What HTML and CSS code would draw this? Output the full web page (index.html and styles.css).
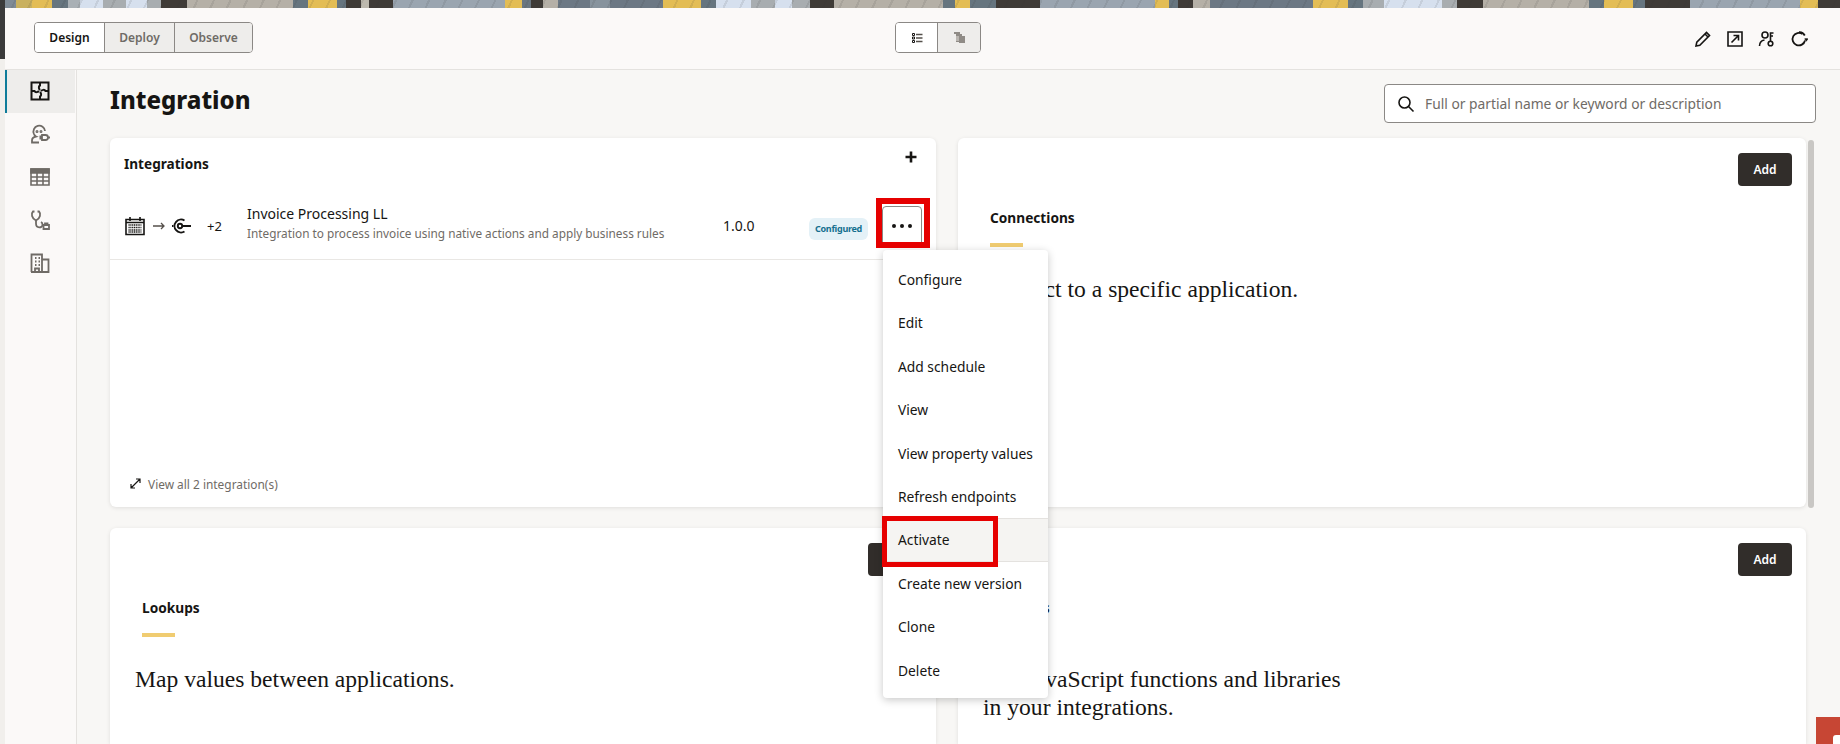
FILE: index.html
```html
<!DOCTYPE html>
<html lang="en">
<head>
<meta charset="utf-8">
<title>Integration</title>
<link rel="stylesheet" href="styles.css">
</head>
<body>
<div class="banner"></div>
<div class="app">
  <div class="edge"><div class="edge-dark"></div></div>
  <div class="main">
    <header class="toolbar">
      <div class="seg seg-tabs">
        <button class="seg-btn seg-on tab-a">Design</button>
        <button class="seg-btn tab-b">Deploy</button>
        <button class="seg-btn tab-c">Observe</button>
      </div>
      <div class="seg seg-views">
        <button class="seg-btn seg-on view-btn">
          <svg width="12" height="12" viewBox="0 0 12 12" fill="none" stroke="#161513"><path d="M1.500 1.500h2v2h-2zM1.500 8.500h2v2h-2zM1.500 5h2v2h-2z" stroke-width="1"/><path d="M5 2.500h6.500M5 6h6.500M5 9.500h6.500" stroke="#55504b" stroke-width="1.300"/></svg>
        </button>
        <button class="seg-btn view-btn">
          <svg width="13" height="13" viewBox="0 0 13 13"><path d="M1 1h6v2h2v2h3v7H6v-1H3V3H1z" fill="#8f8b86"/><path d="M3 5h3v5H3z" fill="#b9b5b0"/></svg>
        </button>
      </div>
      <div class="tools">
        <svg width="18" height="18" viewBox="0 0 18 18" fill="none" stroke="#161513" stroke-width="1.600"><path d="M2 16l.8-3.800L12.500 2.500l3 3L5.800 15.200z"/><path d="M11 4l3 3"/></svg>
        <svg width="18" height="18" viewBox="0 0 18 18" fill="none" stroke="#161513" stroke-width="1.600"><path d="M2 2h14v14H2z"/><path d="M5.500 12.500l7-7M7.500 5.500h5v5"/></svg>
        <svg width="18" height="18" viewBox="0 0 18 18" fill="none" stroke="#161513" stroke-width="1.600"><circle cx="7" cy="5" r="3"/><path d="M1.500 16c0-3.500 2-5.500 5-6"/><circle cx="12.500" cy="13.500" r="2.300"/><path d="M12.500 11V3h3M12.500 6h2.500"/></svg>
        <svg width="18" height="18" viewBox="0 0 18 18" fill="none" stroke="#161513" stroke-width="1.800"><path d="M15 10.500A6.300 6.300 0 1 1 12.500 4"/><path d="M14.800 8.800h3l-1.500 2.400z" fill="#161513" stroke-width="0.800"/><path d="M9 2.200c2.500-.2 4.600 1 5.800 3.300"/></svg>
      </div>
    </header>
    <div class="body-row">
      <nav class="sidebar">
        <div class="nav-item nav-on">
          <svg width="20" height="20" viewBox="0 0 20 20" fill="none" stroke="#161513" stroke-width="2"><path d="M1.500 1.500h17v17h-17z"/><path d="M10 1.500v3c-2 1-1 3.500 0 4.500M18.500 10h-3c-1-2-3.500-1-4.500 0M10 18.500v-3c2-1 1-3.500 0-4.500M1.500 10h3c1 2 3.500 1 4.500 0"/></svg>
        </div>
        <div class="nav-item">
          <svg width="20" height="20" viewBox="0 0 20 20" fill="none" stroke="#6f6b66" stroke-width="1.800"><path d="M4 10a5.800 5.800 0 1 1 11-3"/><path d="M4 10c.3 1.300 1 2 2 2.500C3.500 13 2 14.500 2 16.500V18.500h7"/><circle cx="7" cy="7.500" r=".6"/><circle cx="11" cy="7.500" r=".6"/><path d="M12 11h3.500a2.500 2.500 0 0 1 0 5H12zM18 13.500h2M9.500 12.500H12M9.500 14.500H12"/></svg>
        </div>
        <div class="nav-item">
          <svg width="20" height="18" viewBox="0 0 20 18" fill="none" stroke="#6f6b66" stroke-width="1.600"><path d="M1 1h18v16H1z"/><path d="M1 1h18v4H1z" fill="#6f6b66"/><path d="M1 9h18M1 13h18M7 5v12M13 5v12"/></svg>
        </div>
        <div class="nav-item">
          <svg width="20" height="20" viewBox="0 0 20 20" fill="none" stroke="#6f6b66" stroke-width="1.800"><path d="M4.500 1.500H3C1 3.500 1.500 8.500 6 10.500c4.500-2 5-7 3-9H7.500"/><path d="M6 10.500v3c0 5 6.500 5 6.500 1 0-1-.5-2-1.500-2.500"/><path d="M13.500 15h5.500v4h-5.500zM15 15v-1.500h2.500V15"/></svg>
        </div>
        <div class="nav-item">
          <svg width="20" height="20" viewBox="0 0 20 20" fill="none" stroke="#6f6b66" stroke-width="1.800"><path d="M1.500 19V1.500h10.500V19M12 6.500h6.500V19H1"/><path d="M5 5h1.500M8.500 5H10M5 8.500h1.500M8.500 8.500H10M5 12h1.500M8.500 12H10M5 19v-3.500h4V19"/></svg>
        </div>
      </nav>
      <main class="work">
        <div class="head">
          <h1 class="title">Integration</h1>
          <div class="search">
            <svg width="18" height="18" viewBox="0 0 18 18" fill="none" stroke="#161513" stroke-width="1.600"><circle cx="7.500" cy="7.500" r="5.500"/><path d="M11.500 11.500l5 5"/></svg>
            <span class="search-ph">Full or partial name or keyword or description</span>
          </div>
        </div>
        <div class="grid">
          <section class="card list-card">
            <div class="list-head">
              <h2 class="list-title">Integrations</h2>
              <svg class="plus" width="14" height="14" viewBox="0 0 14 14"><path d="M7 1.500v11M1.500 7h11" stroke="#161513" stroke-width="2.600"/></svg>
            </div>
            <div class="row">
              <div class="row-icons">
                <svg width="20" height="20" viewBox="0 0 20 20" fill="none" stroke="#161513"><path d="M1 3.500h18v15H1z" stroke-width="1.600"/><path d="M5 1v4M15 1v4" stroke-width="1.600"/><path d="M1 6.500h18" stroke-width="1.500"/><path d="M3.500 9h13M3.500 11.500h13M3.500 14h13M3.500 16h13" stroke-width="1.500" stroke-dasharray="1.200 .6"/></svg>
                <svg class="arrow" width="12" height="8" viewBox="0 0 12 8" fill="none" stroke="#55504b" stroke-width="1.300"><path d="M0 4h11M8 1l3 3-3 3"/></svg>
                <svg class="target" width="19" height="16" viewBox="0 0 19 16" fill="none" stroke="#161513" stroke-width="1.900"><path d="M12.500 2.500A6.500 6.500 0 1 0 12.500 13.500"/><circle cx="8" cy="8" r="2.200"/><path d="M10 8h9M0 8h1.500"/></svg>
                <span class="more">+2</span>
              </div>
              <div class="row-main">
                <div class="row-name">Invoice Processing LL</div>
                <div class="row-desc">Integration to process invoice using native actions and apply business rules</div>
              </div>
              <div class="row-ver">1.0.0</div>
              <span class="badge">Configured</span>
              <button class="dots" aria-label="Actions"><i></i><i></i><i></i></button>
            </div>
            <div class="list-foot">
              <svg width="11" height="11" viewBox="0 0 11 11" fill="none" stroke="#161513" stroke-width="1.200"><path d="M1 10l9-9M6 1h4v4M1 6v4h4"/></svg>
              <span>View all 2 integration(s)</span>
            </div>
          </section>
          <section class="card feature">
            <div class="feat-top"><button class="add">Add</button></div>
            <h2 class="feat-title">Connections</h2>
            <div class="feat-bar"></div>
            <p class="feat-text">Connect to a specific application.</p>
          </section>
          <section class="card feature card-cut">
            <div class="feat-top"><button class="add">Add</button></div>
            <h2 class="feat-title">Lookups</h2>
            <div class="feat-bar"></div>
            <p class="feat-text">Map values between applications.</p>
          </section>
          <section class="card feature card-cut">
            <div class="feat-top"><button class="add">Add</button></div>
            <h2 class="feat-title">Libraries</h2>
            <div class="feat-bar"></div>
            <p class="feat-text">Use JavaScript functions and libraries<br>in your integrations.</p>
          </section>
        </div>
        <div class="scroll-thumb"></div>
      </main>
    </div>
  </div>
</div>
<ul class="menu">
  <li>Configure</li>
  <li>Edit</li>
  <li>Add schedule</li>
  <li>View</li>
  <li>View property values</li>
  <li>Refresh endpoints</li>
  <li class="menu-hover">Activate</li>
  <li>Create new version</li>
  <li>Clone</li>
  <li>Delete</li>
</ul>
<div class="mark mark-dots"></div>
<div class="mark mark-activate"></div>
<div class="corner"><i></i></div>
</body>
</html>
```
FILE: styles.css
```css
* { box-sizing: border-box; }
html, body { margin: 0; padding: 0; height: 744px; overflow: hidden; }
body {
  position: relative;
  font-family: "Noto Sans", "Open Sans", sans-serif;
  color: #161513;
  background: #f8f7f5;
}
button { font-family: inherit; padding: 0; }

.banner {
  height: 8px;
  background:
    repeating-linear-gradient(115deg, transparent 0 13px, rgba(50,50,50,.1) 13px 15px),
    linear-gradient(90deg,
    #3b3b3b 0 5px, #7f8b96 5px 16px, #c9b15f 16px 32px, #e3bd55 32px 52px, #66757f 52px 68px,
    #a9b0b5 68px 80px, #d6e0ee 80px 103px, #a8adb0 103px 126px, #d6e0ee 126px 147px, #a8adb0 147px 161px,
    #3f3b37 161px 187px, #b5b0a7 187px 293px, #66757f 293px 308px, #e3bd55 308px 337px, #66757f 337px 346px,
    #3f3b37 346px 361px, #bdb9ae 361px 369px, #3f3b37 369px 393px, #9aa5b0 393px 505px, #e3bd55 505px 522px,
    #6a7680 522px 531px, #3f3b37 531px 543px, #b5b0a7 543px 558px, #6c7884 558px 590px, #87939d 590px 610px,
    #6c7884 610px 663px, #e3bd55 663px 701px, #66757f 701px 716px, #d6e0ee 716px 751px, #a8adb0 751px 775px,
    #d6e0ee 775px 792px, #a8adb0 792px 810px, #3f3b37 810px 834px, #b5b0a7 834px 943px, #66757f 943px 955px,
    #e3bd55 955px 970px, #66757f 970px 996px, #3f3b37 996px 1040px, #9aa5b0 1040px 1155px, #e3bd55 1155px 1169px,
    #66757f 1169px 1178px, #3f3b37 1178px 1193px, #b5b0a7 1193px 1210px, #6c7884 1210px 1313px, #e3bd55 1313px 1348px,
    #66757f 1348px 1363px, #a8adb0 1363px 1384px, #d6e0ee 1384px 1442px, #a8adb0 1442px 1457px, #3f3b37 1457px 1483px,
    #b5b0a7 1483px 1589px, #66757f 1589px 1604px, #e3bd55 1604px 1633px, #66757f 1633px 1645px, #3f3b37 1645px 1690px,
    #9aa5b0 1690px 1800px, #e3bd55 1800px 1818px, #3f3b37 1818px 1840px);
}

.app { display: flex; height: 736px; }
.edge { width: 5px; flex: none; background: #f1efec; }
.edge-dark { height: 51px; background: #3b3b3b; }
.main { flex: 1; display: flex; flex-direction: column; min-width: 0; }

.toolbar {
  height: 62px;
  flex: none;
  display: flex;
  align-items: flex-start;
  padding: 14px 32px 0 29px;
  background: #fbf9f8;
  border-bottom: 1px solid #e4e2df;
  position: relative;
}
.seg {
  display: flex;
  height: 31px;
  border: 1px solid #8b8885;
  border-radius: 4px;
  overflow: hidden;
}
.seg-btn {
  border: 0;
  border-right: 1px solid #8b8885;
  background: #eeedeb;
  color: #6f6b66;
  font-size: 12px;
  font-weight: 600;
  height: 100%;
}
.seg-btn:last-child { border-right: 0; }
.seg-on { background: #fff; color: #161513; }
.tab-a { width: 70px; }
.tab-b { width: 70px; }
.tab-c { width: 77px; }
.seg-views { margin-left: 642px; }
.view-btn { width: 42px; display: flex; align-items: center; justify-content: center; }
.tools {
  margin-left: auto;
  display: flex;
  gap: 14px;
  height: 31px;
  padding-top: 2px;
  align-items: center;
}

.body-row { flex: 1; display: flex; min-height: 0; overflow: hidden; }
.sidebar {
  width: 72px;
  flex: none;
  background: #fbf9f8;
  border-right: 1px solid #e4e2df;
}
.nav-item {
  height: 43px;
  padding-bottom: 2px;
  display: flex;
  align-items: center;
  justify-content: center;
  margin-right: 1px;
}
.nav-on { background: #eeedeb; box-shadow: inset 2px 0 0 #0f7c9a; }

.work { flex: 1; padding: 0 24px 0 33px; position: relative; min-width: 0; }
.head { height: 68px; display: flex; justify-content: space-between; align-items: flex-start; }
.title { margin: 14px 0 0; font-size: 24px; line-height: 32px; font-weight: 800; color: #161513; }
.search {
  margin-top: 14px;
  width: 432px;
  height: 39px;
  background: #fff;
  border: 1px solid #8b8885;
  border-radius: 4px;
  display: flex;
  align-items: center;
  gap: 10px;
  padding-left: 12px;
}
.search-ph { font-size: 13.800px; color: #6f6b66; }

.grid {
  display: grid;
  grid-template-columns: 826px 848px;
  grid-template-rows: 369px 216px;
  column-gap: 22px;
  row-gap: 21px;
}
.card {
  background: #fff;
  border-radius: 6px;
  box-shadow: 0 1px 4px rgba(0,0,0,.1);
}
.card-cut { border-radius: 6px 6px 0 0; }

.list-card { display: flex; flex-direction: column; }
.list-head {
  height: 52px;
  display: flex;
  justify-content: space-between;
  align-items: flex-start;
  padding: 15px 18px 0 14px;
}
.list-title { margin: 0; font-size: 13.600px; line-height: 22px; font-weight: 700; }
.plus { margin-top: -3px; }
.row {
  height: 70px;
  display: flex;
  align-items: flex-start;
  border-bottom: 1px solid #e9e7e4;
  position: relative;
}
.row-icons { width: 137px; flex: none; padding: 26px 0 0 15px; display: flex; align-items: center; }
.arrow { margin-left: 8px; }
.target { margin-left: 7px; }
.more { margin-left: 16px; font-size: 13px; }
.row-main { width: 476px; flex: none; padding-top: 14px; }
.row-name { font-size: 14px; line-height: 20px; }
.row-desc { font-size: 11.800px; line-height: 18px; color: #6f6b66; }
.row-ver { width: 86px; flex: none; padding-top: 26px; font-size: 14px; line-height: 20px; }
.badge {
  flex: none;
  margin-top: 28px;
  width: 59px;
  height: 22px;
  border-radius: 6px;
  background: #e4f1f7;
  color: #15708f;
  font-size: 9px;
  letter-spacing: -0.3px;
  font-weight: 700;
  line-height: 22px;
  text-align: center;
  white-space: nowrap;
}
.dots {
  flex: none;
  margin: 16px 0 0 14px;
  width: 40px;
  height: 40px;
  background: #fff;
  border: 1px solid #8b8885;
  border-radius: 4px;
  display: flex;
  align-items: center;
  justify-content: center;
  gap: 4px;
}
.dots i { width: 4px; height: 4px; border-radius: 50%; background: #161513; }
.list-foot {
  margin-top: auto;
  height: 48px;
  padding: 1px 0 0 20px;
  display: flex;
  align-items: center;
  gap: 7px;
  font-size: 11.900px;
  color: #6f6b66;
}

.feature { padding: 15px 14px 0 32px; }
.feat-top { display: flex; justify-content: flex-end; height: 32px; }
.add {
  width: 54px;
  height: 33px;
  border: 0;
  border-radius: 4px;
  background: #312d2a;
  color: #fff;
  font-size: 12px;
  font-weight: 600;
}
.feat-title { margin: 23px 0 0; font-size: 13.700px; line-height: 20px; font-weight: 700; }
.feat-bar { margin-top: 15px; width: 33px; height: 4px; background: #f0cc71; }
.feat-text {
  margin: 28px 0 0 -7px;
  font-family: "Liberation Serif", "DejaVu Serif", serif;
  font-size: 23.600px;
  line-height: 28px;
  color: #161513;
}

.scroll-thumb {
  position: absolute;
  left: 1731px;
  top: 70px;
  width: 6px;
  height: 368px;
  border-radius: 3px;
  background: #c9c7c4;
}

.menu {
  position: absolute;
  left: 883px;
  top: 250px;
  width: 165px;
  height: 448px;
  margin: 0;
  padding: 8px 0;
  list-style: none;
  background: #fff;
  border-radius: 4px;
  box-shadow: 0 2px 8px rgba(0,0,0,.22);
}
.menu li {
  height: 43.400px;
  line-height: 43px;
  padding-left: 15px;
  font-size: 13.800px;
  white-space: nowrap;
}
.menu-hover {
  background: #f5f4f2;
  box-shadow: inset 0 1px 0 #e4e2df, inset 0 -1px 0 #e4e2df;
}

.mark { position: absolute; border-style: solid; border-color: #e60000; pointer-events: none; }
.mark-dots { left: 876px; top: 198px; width: 54px; height: 50px; border-width: 6px; }
.mark-activate { left: 882px; top: 516px; width: 116px; height: 51px; border-width: 5px; }

.corner { position: absolute; left: 1816px; top: 717px; width: 24px; height: 27px; background: #c74634; }
.corner i { position: absolute; left: 17px; top: 18px; width: 7px; height: 9px; background: #fff; border-radius: 3px 0 0 0; }
```
